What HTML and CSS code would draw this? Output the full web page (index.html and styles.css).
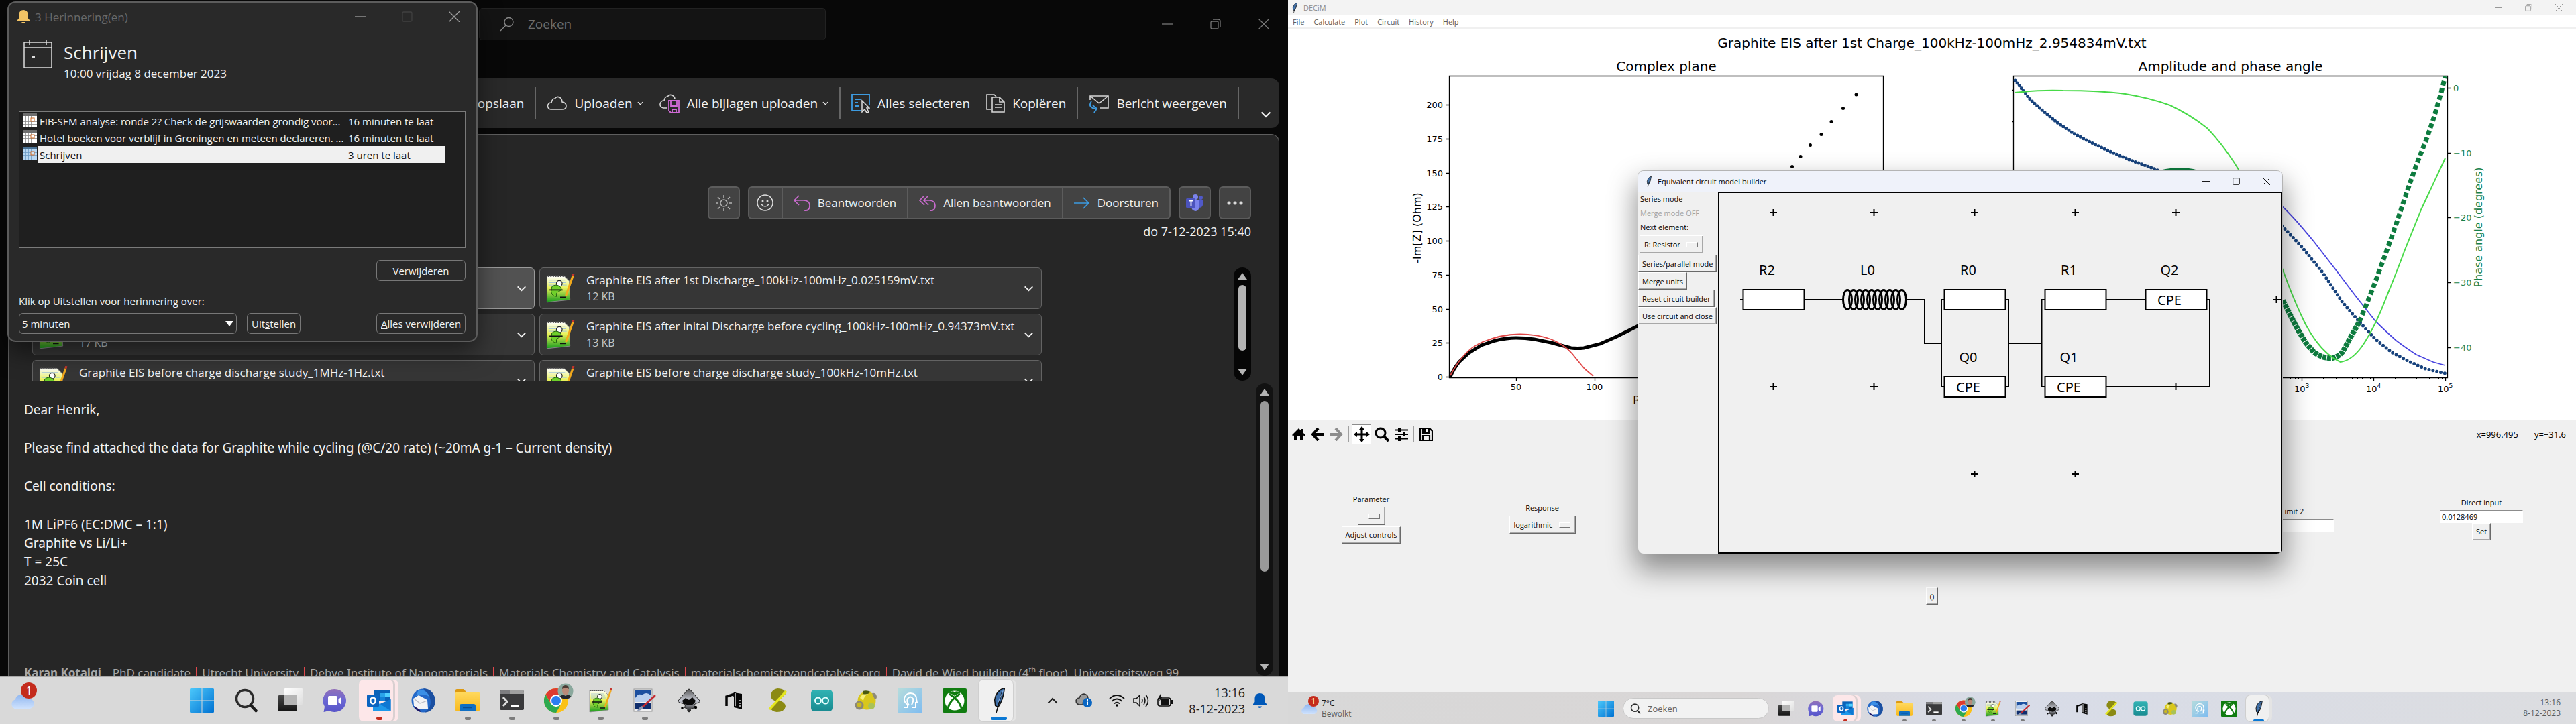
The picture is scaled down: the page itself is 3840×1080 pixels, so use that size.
FILE: index.html
```
<!DOCTYPE html>
<html lang="nl">
<head>
<meta charset="utf-8">
<title>Desktop</title>
<link rel="stylesheet" href="styles.css">
</head>
<body>
<svg class="defs" aria-hidden="true">
  <defs>
    <linearGradient id="gWin" x1="0" y1="0" x2="1" y2="1"><stop offset="0" stop-color="#4cc8fb"/><stop offset="1" stop-color="#0072d2"/></linearGradient>
    <linearGradient id="gWhite" x1="0" y1="0" x2="1" y2="1"><stop offset="0" stop-color="#fff"/><stop offset="1" stop-color="#dedede"/></linearGradient>
    <linearGradient id="gBlack" x1="0" y1="0" x2="0" y2="1"><stop offset="0" stop-color="#474747"/><stop offset="1" stop-color="#141414"/></linearGradient>
    <linearGradient id="gChat" x1="0" y1="0" x2="0" y2="1"><stop offset="0" stop-color="#9270b8"/><stop offset=".5" stop-color="#6a67d4"/><stop offset="1" stop-color="#5754c8"/></linearGradient>
    <linearGradient id="gCloud" x1="0" y1="0" x2="0" y2="1"><stop offset="0" stop-color="#8fb6f0"/><stop offset="1" stop-color="#cfe2fd"/></linearGradient>
    <linearGradient id="gFold" x1="0" y1="0" x2="0" y2="1"><stop offset="0" stop-color="#ffd95e"/><stop offset="1" stop-color="#f8b91d"/></linearGradient>
    <linearGradient id="gInk" x1="0" y1="0" x2="0" y2="1"><stop offset="0" stop-color="#555"/><stop offset=".5" stop-color="#c9ccd6"/><stop offset="1" stop-color="#111"/></linearGradient>
    <linearGradient id="gTeal" x1="0" y1="0" x2="0" y2="1"><stop offset="0" stop-color="#31b3b4"/><stop offset="1" stop-color="#188a90"/></linearGradient>
    <linearGradient id="gHead" x1="0" y1="0" x2="1" y2="1"><stop offset="0" stop-color="#b5dcdc"/><stop offset="1" stop-color="#7fbcf0"/></linearGradient>
    <linearGradient id="gNp" x1="0" y1="0" x2="0" y2="1"><stop offset="0" stop-color="#fff"/><stop offset=".45" stop-color="#e9f25a"/><stop offset="1" stop-color="#149b1c"/></linearGradient>
  </defs>
  <symbol id="i-win" viewBox="0 0 36 36"><path fill="url(#gWin)" d="M1.500 0H17.500v17.500H0V1.500A1.500 1.500 0 0 1 1.500 0zM18.500 0H34.500A1.500 1.500 0 0 1 36 1.500V17.500H18.500zM0 18.500H17.500V36H1.500A1.500 1.500 0 0 1 0 34.500zM18.500 18.500H36V34.500A1.500 1.500 0 0 1 34.500 36H18.500z"/></symbol>
  <symbol id="i-search" viewBox="0 0 36 36"><circle cx="16" cy="15" r="12.500" fill="none" stroke="#2b2b2b" stroke-width="3.500"/><path d="M25 25L32.500 33" stroke="#1d1d1d" stroke-width="4.500" stroke-linecap="round"/></symbol>
  <symbol id="i-task" viewBox="0 0 36 36"><rect x="0" y="10" width="27" height="24" rx="1" fill="url(#gBlack)"/><rect x="9" y="0" width="27" height="24" rx="1" fill="url(#gWhite)"/><path fill="#b5b5b5" d="M9 10H27V24H9z"/></symbol>
  <symbol id="i-chat" viewBox="0 0 36 36"><path fill="url(#gChat)" d="M18 1a17 17 0 1 1-8 32L1.500 35L3 27A17 17 0 0 1 18 1z"/><rect x="8" y="11" width="14" height="14" rx="2" fill="#fff"/><path fill="#fff" d="M23.500 16L28 12.500V24L23.500 20.500z"/></symbol>
  <symbol id="i-outlook" viewBox="0 0 36 36"><path fill="#0a62b8" d="M11 2H34V18H11z"/><path fill="#2aa4ea" d="M19 7H27V13H19z"/><path fill="#50d0ff" d="M27 7H34V13H27z"/><path fill="#1382d8" d="M19 13H27V19H19z"/><path fill="#1d98ea" d="M9 16L22 25L35.500 16V33H9z"/><path fill="#0e77d2" d="M35.500 16V33L19 23z"/><rect x="0" y="9" width="18" height="18" rx="1.500" fill="#0b64c0"/><ellipse cx="9" cy="18" rx="3.800" ry="4.500" fill="none" stroke="#fff" stroke-width="2.600"/></symbol>
  <symbol id="i-bird" viewBox="0 0 36 36"><circle cx="18" cy="18" r="17.500" fill="#2468c8"/><path fill="#1b4fa0" d="M18 0C30 0 37 10 35.500 22C34 31 26 36 20 35.500C29 30 31 20 27 12C24 6 21 4 18 0z"/><path fill="#3b8fe6" d="M11 2C18 1 25 6 28 13C22 8 15 8 7 11z"/><path fill="#f3f3f5" d="M3 15L11 10L24 17L25 30L11 31L4 26z"/><path fill="none" stroke="#b7bac4" stroke-width="1.200" d="M4 15L13 22L24 18"/><path fill="#20135e" d="M4 26L12 31L15 35C10 34 6 31 4 26z"/></symbol>
  <symbol id="i-folder" viewBox="0 0 36 36"><path fill="#dd9a12" d="M0 3Q0 1 2 1H12L16 5V12H0z"/><rect x="0" y="5" width="36" height="29" rx="2" fill="url(#gFold)"/><path fill="#0f6fc4" d="M6 34V26Q6 23 9 23H27Q30 23 30 26V34z"/><path stroke="#0b4d90" stroke-width="1.500" d="M11 28.500H25"/></symbol>
  <symbol id="i-term" viewBox="0 0 36 36"><rect x="0" y="3" width="36" height="29" rx="2" fill="#3a3a3c"/><path fill="#7d7d80" d="M2 3H15V8H0V5Q0 3 2 3z"/><path fill="#a0a0a0" d="M15 3H34Q36 3 36 5V8H15z"/><path fill="none" stroke="#ddd" stroke-width="3" d="M5 13L11 19.500L5 26"/><path stroke="#fff" stroke-width="3" d="M17 26H28"/></symbol>
  <symbol id="i-chrome" viewBox="0 0 44 44"><g transform="translate(0 8)"><circle cx="18" cy="18" r="18" fill="#fbc116"/><path fill="#de3b30" d="M18 9H33.600A18 18 0 0 0 2.400 9L10 22z"/><path fill="#2da94f" d="M2.400 9A18 18 0 0 0 18 36L26 22L18 27L10 22.500z"/><circle cx="18" cy="18" r="9" fill="#fff"/><circle cx="18" cy="18" r="7" fill="#2c7df0"/></g><circle cx="32" cy="12" r="11.500" fill="#8aa89d"/><ellipse cx="32" cy="11" rx="5" ry="7" fill="#b98a78"/><path fill="#4b3a33" d="M27 9Q27 3 32 3T37 9Q32 5 27 9z"/><path fill="#23252b" d="M23.500 20Q27 16 32 19Q37 16 40.500 20A11.500 11.500 0 0 1 23.500 20z"/></symbol>
  <symbol id="i-npp" viewBox="0 0 36 36"><path fill="url(#gNp)" stroke="#8a8a8a" stroke-width=".8" d="M2 3H23L29 9L30 32L2 35z"/><path stroke="#555" stroke-width="2" stroke-dasharray="1.500 1.500" d="M3 3H22"/><path stroke="#9fc3dc" stroke-width=".8" d="M4 8H24M4 11H25M4 14H26"/><circle cx="17" cy="12" r="3.500" fill="#fff" stroke="#222"/><path fill="#6fd02a" stroke="#1e5c10" stroke-width=".8" d="M8 16Q13 12 18 16Q22 20 16 22Q12 24 14 28Q8 28 7 22z"/><path stroke="#111" stroke-width="1.500" d="M5 20H21M18 29H25"/><path stroke="#f2a91c" stroke-width="2.600" d="M33.500 3L25 27"/><path stroke="#c4352c" stroke-width="2.600" d="M34.300 0L33.500 3"/></symbol>
  <symbol id="i-pic" viewBox="0 0 36 36"><rect x="2" y="1" width="27" height="33" fill="#f1f1f1" stroke="#999"/><path fill="#1c4f9f" d="M4 3H27V17H4z"/><path fill="#b9cfee" d="M4 14Q9 6 14 10Q20 4 27 10V20H4z"/><path fill="#0f2e6e" d="M4 22H27V31H4z"/><path stroke="#c42a30" stroke-width="3" stroke-linecap="round" d="M33 11L14 28"/><path fill="#8b97b3" d="M7 33Q9 28 14 26L16 28Q14 33 7 33z"/></symbol>
  <symbol id="i-ink" viewBox="0 0 36 36"><path fill="url(#gInk)" stroke="#222" d="M16 2Q18 0 20 2L34 18Q35 21 29 22Q24 24 27 27Q25 30 20 31Q22 34 18 35Q15 34 16 31L11 28Q15 24 8 22Q1 21 2 18z"/><path fill="#0b0b0b" d="M8 18L13 14L18 17L23 13L28 18Q26 24 20 25L10 23z"/><circle cx="8" cy="29" r="1.800"/><circle cx="28" cy="28" r="2.200"/></symbol>
  <symbol id="i-office" viewBox="0 0 36 36"><path fill="none" stroke="#060606" stroke-width="3.500" d="M8 26V12L20 8V12"/><path fill="#060606" d="M19 6L31 8V31L19 28z"/><path stroke="#d9d9d9" stroke-width="1.500" d="M21 7V26M26 18H29M26 22H29M26 26H29"/></symbol>
  <symbol id="i-s" viewBox="0 0 36 36"><path fill="#8b8a14" d="M18 0C26 0 31 4 30 8L20 18Q30 20 30 27Q28 35 17 35Q9 34 7 28L17 19Q7 17 8 9Q10 1 18 0z"/><path stroke="#e4e61e" stroke-width="3.500" d="M31 4L6 31"/></symbol>
  <symbol id="i-ard" viewBox="0 0 36 36"><rect x="2" y="2" width="32" height="32" rx="5" fill="url(#gTeal)"/><circle cx="12.500" cy="18" r="4.500" fill="none" stroke="#e8ffff" stroke-width="2"/><circle cx="23.500" cy="18" r="4.500" fill="none" stroke="#e8ffff" stroke-width="2"/></symbol>
  <symbol id="i-ball" viewBox="0 0 36 36"><circle cx="19" cy="18" r="13.500" fill="#d8c71c"/><path fill="#f6ef7a" d="M9 14Q13 6 21 8Q15 11 14 18z"/><circle cx="8" cy="25" r="6.500" fill="#8b8875"/><circle cx="8" cy="24" r="3.500" fill="#c9b822"/><path fill="#49590f" d="M13 4Q19 2 25 5Q20 10 13 8z"/><path fill="#8e8b78" d="M27 7Q33 6 34 12Q34 16 31 16Z"/><circle cx="26" cy="26" r="5" fill="#a9c257"/></symbol>
  <symbol id="i-head" viewBox="0 0 36 36"><path fill="url(#gHead)" d="M0 0H36V36H0z"/><path fill="none" stroke="#fff" stroke-width="2" d="M8 28H14V24Q8 20 9 14Q12 7 18 7Q27 7 27 16L28 21H26V28H20"/><path fill="none" stroke="#fff" stroke-width="2" d="M16 25Q12 19 14 15Q18 10 22 15Q23 19 20 24"/></symbol>
  <symbol id="i-xbox" viewBox="0 0 36 36"><rect width="36" height="36" rx="2" fill="#107c10"/><circle cx="18" cy="18" r="14.500" fill="#fff"/><path fill="#107c10" d="M9 7Q13 7 18 11Q23 7 27 7Q22 2.500 18 5.500Q14 2.500 9 7z"/><path fill="none" stroke="#107c10" stroke-width="3" d="M10 8Q25 17 28 29M26 8Q11 17 8 29"/></symbol>
  <symbol id="i-feather" viewBox="0 0 36 36"><path fill="#3c6ea8" stroke="#111" stroke-width="1.500" d="M26 0Q14 4 12 17L13 25L17 27Q24 18 26 0z"/><path stroke="#101010" stroke-width="1.500" d="M22 7L14 36"/><path stroke="#8db5e6" d="M24 4L17 20"/></symbol>
  <symbol id="i-weather" viewBox="0 0 36 24"><path fill="url(#gCloud)" d="M7 23a7 7 0 0 1 1-13A10 10 0 0 1 27 9A7 7 0 0 1 29 23z"/></symbol>
  <symbol id="i-close" viewBox="0 0 16 16"><path fill="none" stroke="currentColor" stroke-width="1.300" d="M0 0L16 16M16 0L0 16"/></symbol>
  <symbol id="i-min" viewBox="0 0 16 16"><path fill="none" stroke="currentColor" stroke-width="1.300" d="M0 8H16"/></symbol>
  <symbol id="i-max" viewBox="0 0 16 16"><rect x="1" y="1" width="14" height="14" rx="1.500" fill="none" stroke="currentColor" stroke-width="1.300"/></symbol>
  <symbol id="i-rest" viewBox="0 0 16 16"><rect x="1" y="4" width="11" height="11" rx="1.500" fill="none" stroke="currentColor" stroke-width="1.300"/><path fill="none" stroke="currentColor" stroke-width="1.300" d="M4 1H12Q15 1 15 4V12"/></symbol>
  <symbol id="i-chev" viewBox="0 0 16 10"><path fill="none" stroke="currentColor" stroke-width="2" d="M1.500 1.500L8 8L14.500 1.500"/></symbol>
  <symbol id="i-cal" viewBox="0 0 21 20"><path fill="#fff" d="M0 0H21V20H0z"/><path fill="#6e6e6e" d="M0 0H21V4H0z"/><path stroke="#8a8a8a" stroke-width=".8" d="M0 8.500H21M0 12.500H21M0 16.500H21M4.500 4V20M8.500 4V20M12.500 4V20M16.500 4V20"/><rect x="12" y="7" width="5" height="5" fill="#fff" stroke="#d2691e"/></symbol>
  <symbol id="i-calsel" viewBox="0 0 21 20"><path fill="#b7d7f2" d="M0 0H21V20H0z"/><path fill="#4a7396" d="M0 0H21V4H0z"/><path stroke="#6d9cc4" stroke-width=".8" d="M0 8.500H21M0 12.500H21M0 16.500H21M4.500 4V20M8.500 4V20M12.500 4V20M16.500 4V20"/><rect x="12" y="7" width="5" height="5" fill="#cfe4f6" stroke="#d2691e"/></symbol>
</svg>

<div class="desktop">
  <section class="screen screen-left">
    <header class="ol-title">
      <label class="ol-search"><svg width="22" height="22" viewBox="0 0 22 22"><circle cx="13.500" cy="8" r="6.500" fill="none" stroke="#8a8a8a" stroke-width="1.300"/><path stroke="#8a8a8a" stroke-width="1.300" d="M9 13L1 21"/></svg><input type="text" placeholder="Zoeken" aria-label="Zoeken"></label>
      <div class="ol-ctl"><button aria-label="Minimaliseren"><svg width="16" height="16"><use href="#i-min"/></svg></button><button aria-label="Verkleinen"><svg width="16" height="16"><use href="#i-rest"/></svg></button><button aria-label="Sluiten"><svg width="16" height="16"><use href="#i-close"/></svg></button></div>
    </header>

    <nav class="ribbon">
      <button>Alles opslaan</button>
      <i class="sep"></i>
      <button><svg width="30" height="22" viewBox="0 0 30 22"><path fill="none" stroke="#d6d6d6" stroke-width="1.600" d="M6 20a5 5 0 0 1 1-10Q8 4 12 4Q15 0 19 2Q23 4 23 9Q29 10 29 15T23 20z"/></svg>Uploaden<svg class="mini" width="9" height="6"><use href="#i-chev"/></svg></button>
      <button class="gap-m"><svg width="30" height="30" viewBox="0 0 30 30"><path fill="none" stroke="#d6d6d6" stroke-width="1.600" d="M12 22H6a5.500 5.500 0 0 1 1-11Q8 5 12 5Q15 1 19 3Q23 5 23 9"/><path fill="none" stroke="#d06ad6" stroke-width="1.800" d="M14 11H29V29H17L14 26zM17 11V19H26V11M19 29V24H25V29"/></svg>Alle bijlagen uploaden<svg class="mini" width="9" height="6"><use href="#i-chev"/></svg></button>
      <i class="sep"></i>
      <button><svg width="28" height="30" viewBox="0 0 28 30"><path fill="none" stroke="#3d9be0" stroke-width="1.800" d="M14 26H1V2H27V18M5 9H14M5 14H10M5 19H12"/><path fill="#292929" stroke="#ddd" stroke-width="1.500" d="M16 11V28L20 24L23 29L26 28L23 22H27z"/></svg>Alles selecteren</button>
      <button class="gap-m"><svg width="28" height="28" viewBox="0 0 28 28"><path fill="none" stroke="#d6d6d6" stroke-width="1.600" d="M7 23H1V1H12L15 4M9 5H20L27 12V27H9zM20 5V12H27M13 16H23M13 20H23"/></svg>Kopiëren</button>
      <i class="sep"></i>
      <button><svg width="30" height="28" viewBox="0 0 30 28"><path fill="none" stroke="#d6d6d6" stroke-width="1.600" d="M2 9V3H29V21H17M2 3L15.500 14L29 3"/><path fill="none" stroke="#3d9be0" stroke-width="2" d="M4 11Q-2 19 9 22M6 17L12 22L8 28"/></svg>Bericht weergeven</button>
      <i class="sep"></i>
      <button class="more" aria-label="Meer"><svg width="16" height="10"><use href="#i-chev"/></svg></button>
    </nav>

    <main class="mail">
      <div class="actions">
        <button class="sq" aria-label="Weergave"><svg width="24" height="24" viewBox="0 0 24 24"><circle cx="12" cy="12" r="5" fill="none" stroke="#b5b5b5" stroke-width="1.500"/><path stroke="#b5b5b5" stroke-width="1.500" d="M12 0V4M12 20V24M0 12H4M20 12H24M3 3L6 6M18 18L21 21M3 21L6 18M18 6L21 3"/></svg></button>
        <div class="group">
          <button class="sq" aria-label="Reactie"><svg width="25" height="25" viewBox="0 0 25 25"><circle cx="12.500" cy="12.500" r="11.500" fill="none" stroke="#ddd" stroke-width="1.500"/><circle cx="9" cy="10" r="1.500" fill="#ddd"/><circle cx="16" cy="10" r="1.500" fill="#ddd"/><path fill="none" stroke="#ddd" stroke-width="1.500" d="M7 15Q12.500 21 18 15"/></svg></button>
          <button><svg width="25" height="24" viewBox="0 0 25 24"><path fill="none" stroke="#c86ccd" stroke-width="1.700" d="M8 1L1 8L8 15M1 8H15Q24 8 24 16T16 23"/></svg>Beantwoorden</button>
          <button><svg width="25" height="24" viewBox="0 0 25 24"><path fill="none" stroke="#c86ccd" stroke-width="1.700" d="M8 1L1 8L8 15M14 1L7 8L14 15M7 8H15Q24 8 24 16T16 23"/></svg>Allen beantwoorden</button>
          <button><svg width="24" height="24" viewBox="0 0 24 24"><path fill="none" stroke="#3d9be0" stroke-width="1.700" d="M0 12H22M14 4L22 12L14 20"/></svg>Doorsturen</button>
        </div>
        <button class="sq" aria-label="Teams"><svg width="26" height="26" viewBox="0 0 26 26"><circle cx="14" cy="4" r="4" fill="#7b83eb"/><circle cx="22" cy="5" r="3" fill="#5059c9"/><path fill="#5059c9" d="M18 9H25V16Q24 20 19 20z"/><path fill="#7b83eb" d="M8 8H20V18Q19 25 14 25Q8 24 8 18z"/><rect x="0" y="6" width="14" height="14" rx="1.500" fill="#4b53bc"/><path stroke="#fff" stroke-width="1.800" d="M4 9.500H11M7.500 9.500V17"/></svg></button>
        <button class="sq" aria-label="Meer acties"><svg width="24" height="6" viewBox="0 0 24 6"><circle cx="3" cy="3" r="2.500" fill="#ddd"/><circle cx="12" cy="3" r="2.500" fill="#ddd"/><circle cx="21" cy="3" r="2.500" fill="#ddd"/></svg></button>
      </div>
      <p class="date">do 7-12-2023 15:40</p>

      <div class="att-area">
        <div class="att-grid">
          <button class="att sel" aria-label="Bijlage 1"><svg width="44" height="44"><use href="#i-npp"/></svg><svg class="dd" width="15" height="9"><use href="#i-chev"/></svg></button>
          <button class="att"><svg width="44" height="44"><use href="#i-npp"/></svg><span>Graphite EIS after 1st Discharge_100kHz-100mHz_0.025159mV.txt<small>12 KB</small></span><svg class="dd" width="15" height="9"><use href="#i-chev"/></svg></button>
          <button class="att"><svg width="44" height="44"><use href="#i-npp"/></svg><span><br><small>17 KB</small></span><svg class="dd" width="15" height="9"><use href="#i-chev"/></svg></button>
          <button class="att"><svg width="44" height="44"><use href="#i-npp"/></svg><span>Graphite EIS after inital Discharge before cycling_100kHz-100mHz_0.94373mV.txt<small>13 KB</small></span><svg class="dd" width="15" height="9"><use href="#i-chev"/></svg></button>
          <button class="att"><svg width="44" height="44"><use href="#i-npp"/></svg><span>Graphite EIS before charge discharge study_1MHz-1Hz.txt<br><br></span><svg class="dd" width="15" height="9"><use href="#i-chev"/></svg></button>
          <button class="att"><svg width="44" height="44"><use href="#i-npp"/></svg><span>Graphite EIS before charge discharge study_100kHz-10mHz.txt<br><br></span><svg class="dd" width="15" height="9"><use href="#i-chev"/></svg></button>
        </div>
        <div class="sbar att-sbar"><i class="up"></i><i class="thumb"></i><i class="down"></i></div>
      </div>

      <div class="body-area">
        <article class="letter">
          <p>Dear Henrik,</p>
          <p>Please find attached the data for Graphite while cycling (@C/20 rate) (~20mA g-1 – Current density)</p>
          <p><u>Cell conditions</u>:</p>
          <p>1M LiPF6 (EC:DMC – 1:1)<br>Graphite vs Li/Li+<br>T = 25C<br>2032 Coin cell</p>
          <footer class="sign"><b>Karan Kotalgi</b><i></i><span>PhD candidate</span><i></i><span>Utrecht University</span><i></i><span>Debye Institute of Nanomaterials</span><i></i><span>Materials Chemistry and Catalysis</span><i></i><span>materialschemistryandcatalysis.org</span><i></i><span>David de Wied building (4<sup>th</sup> floor), Universiteitsweg 99</span></footer>
        </article>
        <div class="sbar body-sbar"><i class="up"></i><i class="thumb"></i><i class="down"></i></div>
      </div>
    </main>

    <footer class="tb tb-l">
      <div class="weather"><svg width="38" height="25"><use href="#i-weather"/></svg><b class="badge">1</b></div>
      <div class="apps">
        <button aria-label="Start"><svg><use href="#i-win"/></svg></button>
        <button aria-label="Zoeken"><svg><use href="#i-search"/></svg></button>
        <button aria-label="Taakweergave"><svg><use href="#i-task"/></svg></button>
        <button aria-label="Chat"><svg><use href="#i-chat"/></svg></button>
        <button class="alert" aria-label="Outlook"><svg><use href="#i-outlook"/></svg></button>
        <button aria-label="Thunderbird"><svg><use href="#i-bird"/></svg></button>
        <button class="run" aria-label="Verkenner"><svg><use href="#i-folder"/></svg></button>
        <button class="run" aria-label="Terminal"><svg><use href="#i-term"/></svg></button>
        <button class="run chrome" aria-label="Chrome"><svg><use href="#i-chrome"/></svg></button>
        <button class="run" aria-label="Notepad++"><svg><use href="#i-npp"/></svg></button>
        <button class="run" aria-label="Afbeeldingen"><svg><use href="#i-pic"/></svg></button>
        <button aria-label="Inkscape"><svg><use href="#i-ink"/></svg></button>
        <button aria-label="Office"><svg><use href="#i-office"/></svg></button>
        <button aria-label="Scilab"><svg><use href="#i-s"/></svg></button>
        <button aria-label="Arduino"><svg><use href="#i-ard"/></svg></button>
        <button aria-label="Viewer"><svg><use href="#i-ball"/></svg></button>
        <button aria-label="Profiel"><svg><use href="#i-head"/></svg></button>
        <button aria-label="Xbox"><svg><use href="#i-xbox"/></svg></button>
        <button class="active" aria-label="DECiM"><svg><use href="#i-feather"/></svg></button>
      </div>
      <div class="tray">
        <svg class="flip" width="16" height="10"><use href="#i-chev"/></svg>
        <svg class="t-cloud" width="26" height="22" viewBox="0 0 26 22"><path fill="#9a9a9a" stroke="#333" stroke-width="1.500" d="M6 17Q1 16 1 11Q2 7 6 7Q8 1 13 1Q19 2 19 8L14 10Q10 14 12 17z"/><circle cx="18" cy="14" r="7" fill="#0a66c2"/><path stroke="#fff" stroke-width="2" d="M18 9V11M18 12.500V18"/></svg>
        <svg width="24" height="18" viewBox="0 0 24 18"><path fill="none" stroke="#111" stroke-width="1.700" d="M1 6Q12-4 23 6M4.500 10Q12 3 19.500 10M8 13.500Q12 9.500 16 13.500"/><circle cx="12" cy="16" r="1.800"/></svg>
        <svg width="24" height="20" viewBox="0 0 24 20"><path fill="none" stroke="#111" stroke-width="1.500" d="M1 7H5L10 2V18L5 13H1zM13 7Q15 10 13 13M16 4Q20 10 16 16M19 1Q26 10 19 19"/></svg>
        <svg width="24" height="20" viewBox="0 0 24 20"><rect x="1" y="6" width="19" height="12" rx="3" fill="none" stroke="#111" stroke-width="1.600"/><rect x="5" y="8" width="13" height="8" fill="#111"/><path d="M21 9h2v6h-2zM5 0L1 7H4L3 11L8 4H5z" fill="#111"/></svg>
        <p class="clock">13:16<br>8-12-2023</p>
        <svg class="t-bell" width="20" height="22" viewBox="0 0 20 22"><path fill="#0058b8" d="M0 18V16L2.500 13V7Q3.500 0 10 0T17.500 7V13L20 16V18zM7 19.500H13Q12 22 10 22T7 19.500z"/></svg>
      </div>
    </footer>

    <div class="reminder" role="dialog" aria-label="Herinneringen">
      <header><svg width="18" height="20" viewBox="0 0 18 20"><path fill="#f3c465" d="M0 15L2.500 12V6Q3 0 9 0T15.500 6V12L18 15V17H0zM6 18H12Q11 20 9 20T6 18z"/></svg><h2>3 Herinnering(en)</h2>
        <button aria-label="Minimaliseren"><svg width="16" height="16"><use href="#i-min"/></svg></button><button class="off" aria-label="Maximaliseren" disabled><svg width="16" height="16"><use href="#i-max"/></svg></button><button aria-label="Sluiten"><svg width="16" height="16"><use href="#i-close"/></svg></button></header>
      <div class="subject"><svg width="43" height="42" viewBox="0 0 43 42"><path fill="none" stroke="#ddd" stroke-width="1.500" d="M1 3H42V41H1zM1 11H42M9 0V7M34 0V7"/><path fill="#ddd" d="M13 23H17V27H13z"/></svg><div><h1>Schrijven</h1><p>10:00 vrijdag 8 december 2023</p></div></div>
      <div class="rlist">
        <table>
          <tr><td class="ic"><svg width="21" height="20"><use href="#i-cal"/></svg></td><td>FIB-SEM analyse: ronde 2? Check de grijswaarden grondig voor...</td><td class="due">16 minuten te laat</td></tr>
          <tr><td class="ic"><svg width="21" height="20"><use href="#i-cal"/></svg></td><td>Hotel boeken voor verblijf in Groningen en meteen declareren. ...</td><td class="due">16 minuten te laat</td></tr>
          <tr class="on"><td class="ic"><svg width="21" height="20"><use href="#i-calsel"/></svg></td><td>Schrijven</td><td class="due">3 uren te laat</td></tr>
        </table>
      </div>
      <div class="rbtn"><button class="w">V<u>e</u>rwijderen</button></div>
      <label class="rlab" for="snooze">Klik op Uitstellen voor herinnering over:</label>
      <div class="rfoot"><span class="selbox"><select id="snooze"><option>5 minuten</option></select></span><button>Uit<u>s</u>tellen</button><button class="w"><u>A</u>lles verwijderen</button></div>
    </div>
  </section>

  <section class="screen screen-right">
    <header class="dc-title"><svg width="16" height="16"><use href="#i-feather"/></svg><h1>DECiM</h1><button aria-label="Minimaliseren"><svg width="11" height="11"><use href="#i-min"/></svg></button><button aria-label="Verkleinen"><svg width="11" height="11"><use href="#i-rest"/></svg></button><button aria-label="Sluiten"><svg width="11" height="11"><use href="#i-close"/></svg></button></header>
    <nav class="dc-menu"><button>File</button><button>Calculate</button><button>Plot</button><button>Circuit</button><button>History</button><button>Help</button></nav>
    <svg class="plot" viewBox="0 43 1920 584" role="img" aria-label="Impedance plots">
      <text class="t20" x="960" y="71" text-anchor="middle">Graphite EIS after 1st Charge_100kHz-100mHz_2.954834mV.txt</text>
      <text class="t20" x="564" y="106" text-anchor="middle">Complex plane</text>
      <text class="t20" x="1405" y="106" text-anchor="middle">Amplitude and phase angle</text>
      <g fill="none" stroke="#000" stroke-width="1.300">
        <path d="M240.500 113.500H887.500V563.500H240.500zM236 156.500H240M236 207.500H240M236 258.500H240M236 308.500H240M236 359.500H240M236 410.500H240M236 461.500H240M236 511.500H240M236 562.500H240M340.500 564V568M457.500 564V568"/>
        <path d="M1081.500 113.500H1728.500V563.500H1081.500zM1729 131.500H1733M1729 228.500H1733M1729 324.500H1733M1729 421.500H1733M1729 518.500H1733M1079 134.500H1081M1079 181.500H1081M1511.500 564V568M1618.500 564V568M1725.500 564V568"/>
        <path stroke-width="1" d="M1487.500 564V566M1494.500 564V566M1501.500 564V566M1506.500 564V566M1543.500 564V566M1562.500 564V566M1575.500 564V566M1586.500 564V566M1594.500 564V566M1601.500 564V566M1608.500 564V566M1613.500 564V566M1650.500 564V566M1669.500 564V566M1682.500 564V566M1693.500 564V566M1701.500 564V566M1708.500 564V566M1715.500 564V566M1720.500 564V566"/>
      </g>
      <g class="t13" text-anchor="end"><text x="231" y="161">200</text><text x="231" y="212">175</text><text x="231" y="263">150</text><text x="231" y="313">125</text><text x="231" y="364">100</text><text x="231" y="415">75</text><text x="231" y="466">50</text><text x="231" y="516">25</text><text x="231" y="567">0</text></g>
      <g class="t13" text-anchor="middle"><text x="340" y="582">50</text><text x="457" y="582">100</text></g>
      <text class="t16" x="564" y="602" text-anchor="middle">Re[Z] (Ohm)</text>
      <text class="t16" transform="translate(198 340) rotate(-90)" text-anchor="middle">-Im[Z] (Ohm)</text>
      <g class="t13 grn"><text x="1737" y="136">0</text><text x="1737" y="233">−10</text><text x="1737" y="329">−20</text><text x="1737" y="426">−30</text><text x="1737" y="523">−40</text></g>
      <g class="t13"><text x="1500" y="585">10<tspan class="t9" dy="-6">3</tspan></text><text x="1607" y="585">10<tspan class="t9" dy="-6">4</tspan></text><text x="1714" y="585">10<tspan class="t9" dy="-6">5</tspan></text></g>
      <text class="t16 grn" transform="translate(1780 339) rotate(-90)" text-anchor="middle">Phase angle (degrees)</text>

      <path fill="none" stroke="#000" stroke-width="5" d="M242 562Q247 550 255 540L269 527L288 515L309 508Q325 504 340 504Q354 504 367 506L392 511L422 519Q432 520 441 519L465 513L490 502L522 486"/>
      <g><circle cx="847" cy="141" r="2.500"/><circle cx="827.500" cy="161.500" r="2.500"/><circle cx="810" cy="181.500" r="2.500"/><circle cx="795" cy="200.500" r="2.500"/><circle cx="778.500" cy="216.500" r="2.500"/><circle cx="764" cy="233.500" r="2.500"/><circle cx="751.500" cy="248.500" r="2.500"/></g>
      <path fill="none" stroke="#e04848" stroke-width="1.800" d="M242 560Q262 522 288 511Q318 498 347 498.500Q374 499 392 506Q412 514 424 528Q436 543 442 550L455 561"/>

      <path fill="none" stroke="#17427c" stroke-width="5" stroke-linecap="round" stroke-dasharray="0 5" d="M1084 120L1096 135L1107 149L1125 165L1147 183L1171 199L1196 212L1223 225L1254 238L1284 249L1302 256"/>
      <path fill="none" stroke="#17427c" stroke-width="5" stroke-linecap="round" stroke-dasharray="0 6" d="M1482 337L1511 368L1542 406L1572 451L1597 480L1621 506L1646 526L1673 540L1695 550L1725 557"/>
      <path fill="none" stroke="#4a45e0" stroke-width="1.800" d="M1482 308Q1496 320 1529 360L1560 400L1591 441L1621 479Q1636 494 1652 508Q1668 520 1682 529L1707 540L1725 545"/>
      <path fill="none" stroke="#0d7b3e" stroke-width="7" d="M1302 257Q1330 250 1355 257"/>
      <path fill="none" stroke="#0d7b3e" stroke-width="8" stroke-dasharray="6 1" d="M1483 448L1493 468L1505 491L1517 511L1529 525Q1542 535 1557 534Q1566 532 1572 525L1584 503L1597 480"/>
      <path fill="none" stroke="#0d7b3e" stroke-width="7" stroke-dasharray="7 4" d="M1597 480L1609 451L1621 420L1636 379L1652 334L1668 286L1682 246L1697 208L1708 176L1719 138L1725 114"/>
      <path fill="none" stroke="#48da48" stroke-width="2" d="M1083 138Q1115 134 1156 135Q1210 135 1248 140Q1285 146 1315 157Q1345 171 1370 191Q1397 219 1419 256M1482 400Q1500 450 1517 484Q1540 527 1569 540Q1585 538 1600 518Q1620 490 1639 439Q1655 400 1664 375L1689 313L1725 236"/>
    </svg>

    <div class="dc-tools">
      <button aria-label="Home"><svg width="20" height="20" viewBox="0 0 20 20"><path d="M10 1L0 11L1.500 12.500L3 11.500V19H8V13H12V19H17V11.500L18.500 12.500L20 11L16 7V2H13V4z"/></svg></button>
      <button aria-label="Back"><svg width="20" height="20" viewBox="0 0 20 20"><path fill="none" stroke="#000" stroke-width="4" d="M11 1L3 10L11 19M3 10H20"/></svg></button>
      <button aria-label="Forward"><svg width="20" height="20" viewBox="0 0 20 20"><path fill="none" stroke="#8c8c8c" stroke-width="4" d="M9 1L17 10L9 19M17 10H0"/></svg></button>
      <i></i>
      <button class="down" aria-label="Pan"><svg width="24" height="24" viewBox="0 0 24 24"><path d="M12 0L16 5H13.500V10.500H19V8L24 12L19 16V13.500H13.500V19H16L12 24L8 19H10.500V13.500H5V16L0 12L5 8V10.500H10.500V5H8z"/></svg></button>
      <button aria-label="Zoom"><svg width="22" height="22" viewBox="0 0 22 22"><circle cx="9" cy="9" r="7" fill="none" stroke="#000" stroke-width="3"/><path stroke="#000" stroke-width="4" d="M14 14L21 21"/></svg></button>
      <button aria-label="Subplots"><svg width="20" height="20" viewBox="0 0 20 20"><path stroke="#000" stroke-width="2" d="M0 3.500H20M0 10H20M0 16.500H20"/><path stroke="#000" stroke-width="4" d="M7 0V7M14 7V13M7 13V20"/></svg></button>
      <i></i>
      <button class="save" aria-label="Save"><svg width="20" height="20" viewBox="0 0 20 20"><path fill="none" stroke="#000" stroke-width="2.200" d="M1 1H15L19 5V19H1zM5 1V8H14V1M5 19V12H15V19"/><path d="M6 2H10V7H6z"/></svg></button>
      <output>x=996.495</output><output>y=−31.6</output>
    </div>

    <div class="dc-ctl">
      <div><label for="par">Parameter</label><span class="om"><select id="par" class="narrow"><option> </option></select></span><button class="tk">Adjust controls</button></div>
      <div><label for="resp">Response</label><span class="om"><select id="resp"><option>logarithmic</option></select></span></div>
      <div></div>
      <div><label for="lim">Limit 2</label><input id="lim" type="text"></div>
      <div><label for="dir">Direct input</label><input id="dir" type="text" value="0.0128469"><button class="tk">Set</button></div>
    </div>
    <div class="dc-foot"><button class="tk">()</button></div>

    <footer class="tb tb-r">
      <div class="weather"><svg width="26" height="18"><use href="#i-weather"/></svg><b class="badge">1</b><p>7°C<br><span>Bewolkt</span></p></div>
      <div class="apps">
        <button aria-label="Start"><svg><use href="#i-win"/></svg></button>
        <label class="pill"><svg><use href="#i-search"/></svg><input type="text" placeholder="Zoeken" aria-label="Zoeken"></label>
        <button aria-label="Taakweergave"><svg><use href="#i-task"/></svg></button>
        <button aria-label="Chat"><svg><use href="#i-chat"/></svg></button>
        <button class="alert" aria-label="Outlook"><svg><use href="#i-outlook"/></svg></button>
        <button aria-label="Thunderbird"><svg><use href="#i-bird"/></svg></button>
        <button class="run" aria-label="Verkenner"><svg><use href="#i-folder"/></svg></button>
        <button class="run" aria-label="Terminal"><svg><use href="#i-term"/></svg></button>
        <button class="run chrome" aria-label="Chrome"><svg><use href="#i-chrome"/></svg></button>
        <button class="run" aria-label="Notepad++"><svg><use href="#i-npp"/></svg></button>
        <button class="run" aria-label="Afbeeldingen"><svg><use href="#i-pic"/></svg></button>
        <button aria-label="Inkscape"><svg><use href="#i-ink"/></svg></button>
        <button aria-label="Office"><svg><use href="#i-office"/></svg></button>
        <button aria-label="Scilab"><svg><use href="#i-s"/></svg></button>
        <button aria-label="Arduino"><svg><use href="#i-ard"/></svg></button>
        <button aria-label="Viewer"><svg><use href="#i-ball"/></svg></button>
        <button aria-label="Profiel"><svg><use href="#i-head"/></svg></button>
        <button aria-label="Xbox"><svg><use href="#i-xbox"/></svg></button>
        <button class="active" aria-label="DECiM"><svg><use href="#i-feather"/></svg></button>
      </div>
      <p class="clock">13:16<br>8-12-2023</p>
    </footer>

    <div class="builder" role="dialog" aria-label="Equivalent circuit model builder">
      <header><svg width="16" height="16"><use href="#i-feather"/></svg><h2>Equivalent circuit model builder</h2><button aria-label="Minimaliseren"><svg width="11" height="11"><use href="#i-min"/></svg></button><button aria-label="Maximaliseren"><svg width="11" height="11"><use href="#i-max"/></svg></button><button aria-label="Sluiten"><svg width="11" height="11"><use href="#i-close"/></svg></button></header>
      <div class="bmain">
        <aside>
          <p>Series mode</p><p class="dim">Merge mode OFF</p><label for="next">Next element:</label>
          <span class="om"><select id="next"><option>R: Resistor</option></select></span>
          <button class="tk">Series/parallel mode</button><button class="tk">Merge units</button><button class="tk">Reset circuit builder</button><button class="tk">Use circuit and close</button>
        </aside>
        <svg class="circuit" viewBox="643 288 837 536" role="img" aria-label="Circuit">
          <path stroke="#000" stroke-width="2" d="M718 317H729M723.500 312V322M868 317H879M873.500 312V322M1018 317H1029M1023.500 312V322M1168 317H1179M1173.500 312V322M1318 317H1329M1323.500 312V322M1469 447H1480M1473.500 442V452M718 577H729M723.500 572V582M868 577H879M873.500 572V582M1323.500 572V582M1018 707H1029M1023.500 702V712M1168 707H1179M1173.500 702V712"/>
          <path fill="none" stroke="#000" stroke-width="2" d="M674 447H678M770 447H826M922 447H949V512H974M978 447H974V577H978M1070 447H1074V577H1070M1074 512H1123.500M1128 447H1123.500V577H1128M1219 447H1279M1369 447H1374V577H1219"/>
          <g fill="#fff" stroke="#000" stroke-width="2"><rect x="678.500" y="432" width="91" height="30"/><rect x="978.500" y="432" width="91" height="30"/><rect x="1128.500" y="432" width="91" height="30"/><rect x="1278.500" y="432" width="91" height="30"/><rect x="978.500" y="562" width="91" height="30"/><rect x="1128.500" y="562" width="91" height="30"/></g>
          <g fill="none" stroke="#000" stroke-width="3"><ellipse cx="834" cy="447" rx="6.500" ry="14.500"/><ellipse cx="843" cy="447" rx="6.500" ry="14.500"/><ellipse cx="852" cy="447" rx="6.500" ry="14.500"/><ellipse cx="861" cy="447" rx="6.500" ry="14.500"/><ellipse cx="870" cy="447" rx="6.500" ry="14.500"/><ellipse cx="879" cy="447" rx="6.500" ry="14.500"/><ellipse cx="888" cy="447" rx="6.500" ry="14.500"/><ellipse cx="897" cy="447" rx="6.500" ry="14.500"/><ellipse cx="906" cy="447" rx="6.500" ry="14.500"/><ellipse cx="915" cy="447" rx="6.500" ry="14.500"/></g>
          <g class="ct" text-anchor="middle"><text x="714" y="410">R2</text><text x="864" y="410">L0</text><text x="1014" y="410">R0</text><text x="1164" y="410">R1</text><text x="1314" y="410">Q2</text><text x="1014" y="540">Q0</text><text x="1164" y="540">Q1</text><text x="1314" y="455">CPE</text><text x="1014" y="585">CPE</text><text x="1164" y="585">CPE</text></g>
        </svg>
      </div>
    </div>
  </section>
</div>
</body>
</html>
```
FILE: styles.css
```
* { box-sizing: border-box; }
body { margin: 0; font-family: "Open Sans", "Noto Sans", sans-serif; font-size: 15px; }
h1, h2, p { margin: 0; font-weight: 400; }
button { font: inherit; color: inherit; background: none; border: 0; padding: 0; margin: 0; white-space: nowrap; }
input, select { font: inherit; color: inherit; margin: 0; }
svg { display: block; flex: none; }
.defs { position: absolute; width: 0; height: 0; }
i { display: block; flex: none; }

.desktop { display: grid; grid-template-columns: 1fr 1fr; height: 100vh; overflow: hidden; }
.screen { position: relative; display: flex; flex-direction: column; min-width: 0; min-height: 0; }

/* Outlook */
.screen-left { background: #080808; color: #f2f2f2; }
.ol-title { display: flex; align-items: flex-start; height: 117px; padding: 12px 28px 0 714px; flex: none; }
.ol-search { display: flex; align-items: center; gap: 20px; width: 517px; height: 48px; padding-left: 30px; background: #141414; border: 1px solid #222; border-radius: 5px; }
.ol-search input { width: 300px; background: none; border: 0; padding: 0; font-size: 19px; }
.ol-search input::placeholder { color: #6c6c6c; }
.ol-ctl { display: flex; gap: 56px; margin: 16px 0 0 auto; color: #777; }

.ribbon { display: flex; align-items: center; justify-content: flex-end; height: 74px; margin: 0 13px 9px 12px; padding-right: 12px; flex: none; background: #292929; border-radius: 12px; font-size: 19px; }
.ribbon button { display: flex; align-items: center; gap: 11px; }
.ribbon .mini { margin-left: -4px; }
.ribbon .sep { width: 2px; height: 48px; margin: 0 16px; background: #666; }
.ribbon .gap-m { margin-left: 24px; }
.ribbon .more { margin: 34px 0 0 16px; }

.mail { flex: 1; min-height: 0; display: flex; flex-direction: column; margin: 0 13px 0 12px; padding-top: 77px; background: #262626; border: 1px solid #5e5e5e; border-bottom: 0; border-radius: 12px 12px 0 0; }
.actions { display: flex; justify-content: flex-end; gap: 12px; height: 49px; margin-right: 41px; font-size: 17px; flex: none; }
.actions > button, .group { background: #434343; border: 2px solid #5c5c5c; border-radius: 6px; }
.actions button { display: flex; align-items: center; gap: 11px; padding: 0 16px; }
.actions .sq { width: 48px; justify-content: center; padding: 0; }
.group { display: flex; }
.group button + button { border-left: 2px solid #5c5c5c; }
.date { margin-right: 41px; text-align: right; font-size: 18px; line-height: 36px; flex: none; }

.att-area { display: flex; height: 169px; margin-top: 36px; padding: 0 41px 0 35px; flex: none; }
.att-grid { display: grid; grid-template-columns: 749px 749px; grid-auto-rows: 62px; gap: 7px; align-content: start; height: 169px; overflow: hidden; font-size: 17px; }
.att { display: flex; align-items: center; background: #363636; border: 1px solid #636363; border-radius: 6px; padding: 0 11px 0 8px; text-align: left; }
.att span { flex: 1; min-width: 0; margin-left: 17px; line-height: 24px; }
.att small { display: block; font-size: 16px; color: #c6c6c6; }
.att .dd { margin-left: auto; }
.att.sel { background: #525252; border-color: #9a9a9a; }

.sbar { display: flex; flex-direction: column; align-items: center; width: 26px; padding: 8px 0; border-radius: 13px; background: #060606; }
.sbar .up { border: 7px solid transparent; border-top: 0; border-bottom: 10px solid #b4b4b4; }
.sbar .down { border: 7px solid transparent; border-bottom: 0; border-top: 10px solid #b4b4b4; margin-top: auto; }
.sbar .thumb { width: 12px; height: 98px; margin-top: 8px; border-radius: 6px; background: #b4b4b4; }
.att-sbar { margin-left: auto; }
.body-sbar { margin: 4px 8px 0 auto; background: #121212; flex: none; }
.body-sbar .thumb { height: 255px; background: #9a9a9a; }
.body-area { flex: 1; min-height: 0; display: flex; overflow: hidden; }
.letter { flex: 1; min-width: 0; padding: 29px 0 0 23px; font: 19px/28px "Noto Sans", sans-serif; overflow: hidden; }
.letter p { margin-bottom: 29px; }
.letter u { text-underline-offset: 3px; }
.sign { display: flex; align-items: center; gap: 8px; margin-top: 112px; font-size: 17px; line-height: 24px; color: #a6a6a6; white-space: nowrap; }
.sign i { width: 1px; height: 18px; background: #e0484c; }
.sign sup { font-size: 11px; line-height: 10px; }

/* Taskbars */
.tb { display: flex; flex: none; color: #1c1c1c; background: #d9d9d9; }
.tb .weather { position: relative; display: flex; align-items: center; }
.badge { position: absolute; border-radius: 50%; background: #c42b1c; color: #fff; text-align: center; font-weight: 400; }
.tb .apps { display: flex; }
.tb .apps button { position: relative; display: flex; align-items: center; justify-content: center; }
.apps .run::after, .apps .alert::after, .apps .active::after { content: ""; position: absolute; left: calc(50% - 4px); bottom: 6px; width: 9px; height: 5px; border-radius: 3px; background: #7c7c7c; }
.apps .alert::after { background: #c42b1c; }
.apps .active::after { left: calc(50% - 12px); width: 24px; background: #0a78d4; }
.apps .alert::before, .apps .active::before { content: ""; position: absolute; inset: 4px 12px 4px 3px; border-radius: 7px; background: #fde7e9; box-shadow: 3px 0 0 #d9d0d1, 8px 0 0 #fde7e9; }
.apps .active::before { background: #f0f0f0; box-shadow: 0 0 0 1px #cfcfcf, 5px 0 0 #e4e4e4; }
.apps button svg { position: relative; }

.tb-l { height: 72px; border-top: 2px solid #aaa; }
.tb-l .weather { width: 268px; padding-left: 14px; }
.tb-l .badge { left: 31px; top: 8px; width: 24px; height: 24px; font-size: 17px; line-height: 24px; }
.tb-l .apps button { width: 66px; height: 70px; }
.tb-l .apps svg { width: 36px; height: 36px; }
.tb-l .apps .chrome svg { width: 44px; height: 44px; margin: -8px 0 0 8px; }
.tb-l .apps .active svg { width: 38px; height: 38px; }
.tray { display: flex; align-items: center; gap: 12px; margin-left: auto; padding-right: 32px; }
.tray .flip { transform: rotate(180deg); margin-right: 14px; }
.tray .t-cloud { margin-right: 12px; }
.clock { text-align: right; }
.tray .clock { width: 95px; font-size: 18px; line-height: 24px; }

.tb-r { height: 48px; border-top: 1px solid #b0b0b0; background: linear-gradient(90deg, #d8d8d8, #d9d6d6 35%, #d8dce8 55%, #dcdde0); }
.tb-r .weather { width: 452px; padding-left: 18px; font-size: 12px; line-height: 16px; }
.tb-r .weather p { margin-left: 6px; }
.tb-r .weather span, .tb-r .clock { color: #5e5e5e; }
.tb-r .badge { left: 30px; top: 5px; width: 16px; height: 16px; font-size: 12px; }
.tb-r .apps button { width: 44px; height: 47px; }
.tb-r .apps svg { width: 24px; height: 24px; }
.tb-r .apps .chrome svg { width: 30px; height: 30px; margin: -6px 0 0 6px; }
.tb-r .apps .alert::before, .tb-r .apps .active::before { right: 7px; }
.tb-r .apps .run::after, .tb-r .apps .alert::after { width: 6px; height: 3px; bottom: 4px; left: calc(50% - 3px); }
.tb-r .apps .active::after { left: calc(50% - 8px); width: 16px; height: 3px; bottom: 4px; }
.pill { display: flex; align-items: center; gap: 10px; width: 218px; height: 31px; margin: 8px 4px 8px 3px; padding-left: 10px; background: #f2f2f2; border: 1px solid #c8c8c8; border-radius: 16px; }
.tb-r .pill svg { width: 16px; height: 16px; }
.pill input { width: 120px; border: 0; background: none; padding: 0; font-size: 13px; }
.pill input::placeholder { color: #666; }
.tb-r .clock { margin: 7px 23px 0 auto; font-size: 12px; line-height: 16px; }

/* Reminder window */
.reminder { position: absolute; left: 11px; top: 2px; width: 701px; height: 508px; display: flex; flex-direction: column; padding: 0 16px 0 15px; background: #292929; border: 2px solid #5c5c5c; border-radius: 12px; box-shadow: 0 14px 36px rgba(0,0,0,.5); }
.reminder header { display: flex; align-items: center; height: 42px; color: #a0a0a0; margin: 0 9px 0 -2px; }
.reminder h2 { flex: 1; margin-left: 8px; font-size: 17px; color: #696969; }
.reminder header button { margin-left: 54px; }
.reminder header .off { color: #404040; }
.subject { display: flex; gap: 17px; margin: 14px 0 0 7px; height: 106px; }
.subject h1 { font-size: 26px; line-height: 36px; }
.subject p { font-size: 17px; line-height: 28px; }
.rlist { height: 204px; background: #1f1f1f; border: 1px solid #7a7a7a; padding: 1px 0 0 5px; }
.rlist table { border-collapse: collapse; }
.rlist td { height: 25px; padding: 0 2px; line-height: 20px; white-space: nowrap; width: 460px; }
.rlist .ic { width: 23px; padding: 0 2px 4px 0; }
.rlist .due { width: 146px; }
.rlist .on td + td { background: #f0f0f0; color: #111; }
.reminder .rbtn { display: flex; justify-content: flex-end; margin-top: 18px; }
.rbtn button, .rfoot button { height: 31px; padding: 0 6px; border: 1px solid #777; border-radius: 6px; }
.reminder button.w { width: 133px; }
.rlab { margin-top: 19px; line-height: 22px; }
.rfoot { display: flex; margin-top: 7px; }
.selbox { position: relative; display: block; width: 325px; margin-right: 15px; }
.selbox select { appearance: none; width: 325px; height: 31px; padding: 0 4px; background: #292929; border: 1px solid #777; border-radius: 6px; }
.selbox::after { content: ""; position: absolute; right: 5px; top: 12px; border: 6px solid transparent; border-top: 8px solid #fff; border-bottom: 0; }
.rfoot .w { margin-left: auto; }

/* DECiM */
.screen-right { background: #f0f0f0; color: #000; font-size: 11px; }
.dc-title { display: flex; align-items: center; height: 23px; padding: 0 20px 0 2px; background: #f3f3f3; color: #8c8c8c; flex: none; }
.dc-title h1 { flex: 1; margin-left: 5px; font-size: 11px; }
.dc-title button, .builder header button { margin-left: 34px; }
.dc-menu { display: flex; gap: 14px; height: 20px; padding-left: 7px; background: #fff; border-bottom: 2px solid #f0f0f0; color: #5c5c5c; flex: none; }
.plot { width: 100%; background: #fff; }
.plot text { font-family: "DejaVu Sans", sans-serif; }
.t20 { font-size: 20px; }
.t16 { font-size: 16px; }
.t13 { font-size: 13px; }
.t9 { font-size: 9px; }
.grn { fill: #17804a; }
.dc-tools { display: flex; align-items: center; height: 41px; padding: 0 15px 0 6px; flex: none; }
.dc-tools button { margin-right: 8px; }
.dc-tools i { width: 1px; height: 24px; margin-right: 4px; background: #a0a0a0; }
.dc-tools .save { margin-left: 4px; }
.dc-tools .down { display: flex; align-items: center; justify-content: center; width: 29px; height: 29px; margin-right: 5px; background: #fff; border: 1px solid #fff; border-color: #8c8c8c #fff #fff #8c8c8c; }
.dc-tools output { margin-left: 24px; font-size: 13px; }
.dc-tools button + output { margin-left: auto; }
.dc-ctl { display: grid; grid-template-columns: 248fr 262fr 846fr 282fr 282fr; align-items: center; height: 208px; }
.dc-ctl > div { display: flex; flex-direction: column; align-items: center; }
.dc-ctl label { line-height: 22px; }
.dc-ctl input { width: 124px; height: 19px; padding: 0 2px; background: #fff; border: 1px solid #fff; border-color: #8c8c8c #fff #fff #8c8c8c; }
.tk { height: 26px; padding: 0 5px; border: 1px solid #fff; border-color: #fff #6a6a6a #6a6a6a #fff; box-shadow: inset -1px -1px 0 #a8a8a8; }
.om { position: relative; display: block; width: max-content; margin-bottom: 2px; }
.om select { appearance: none; height: 27px; padding: 0 33px 0 6px; background: #f0f0f0; border: 1px solid #fff; border-color: #fff #6a6a6a #6a6a6a #fff; box-shadow: inset -1px -1px 0 #a8a8a8; }
.om .narrow { width: 41px; padding: 0; }
.om::after { content: ""; position: absolute; right: 8px; top: 10px; width: 15px; height: 6px; border: 1px solid #fff; border-color: #fff #777 #777 #fff; }
.dc-foot { flex: 1; text-align: center; }

/* Circuit builder window */
.builder { position: absolute; left: 522px; top: 255px; width: 960px; height: 571px; display: flex; flex-direction: column; overflow: hidden; background: #f0f0f0; border-radius: 8px; box-shadow: 0 0 0 1px #b4b4b4, 0 20px 40px 4px rgba(0,0,0,.42); }
.builder header { display: flex; align-items: center; height: 31px; padding: 0 18px 0 8px; background: #eff2fa; flex: none; }
.builder h2 { flex: 1; margin-left: 5px; font-size: 11px; }
.bmain { flex: 1; min-height: 0; display: flex; }
.bmain aside { width: 119px; display: flex; flex-direction: column; align-items: flex-start; flex: none; }
.bmain aside p, .bmain aside label { padding-left: 3px; line-height: 21px; }
.bmain .dim { color: #a3a3a3; }
.bmain .om { margin-left: 2px; margin-top: 2px; }
.circuit { flex: 1; min-width: 0; height: 100%; border: 2px solid #000; }
.circuit text { font: 20px "Noto Sans", sans-serif; }
```
